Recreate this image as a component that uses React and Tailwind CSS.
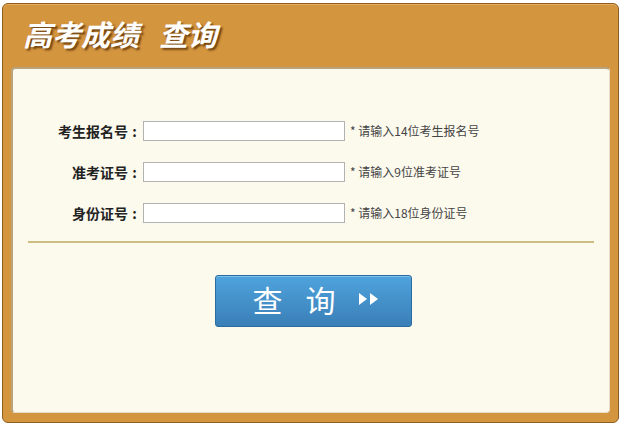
import { useState } from 'react';

const rows = [
  { label: '考生报名号', hint: '请输入14位考生报名号' },
  { label: '准考证号', hint: '请输入9位准考证号' },
  { label: '身份证号', hint: '请输入18位身份证号' },
];

function App() {
  const [values, setValues] = useState(['', '', '']);

  return (
    <div className="w-[621px] h-[425px] bg-white pt-[3px] pl-[2px] font-['Microsoft_YaHei','Noto_Sans_CJK_SC',sans-serif]">
      <div className="w-[617px] h-[420px] rounded-[6px] border border-[#8f5d1f] bg-[#d4953f] flex flex-col shadow-[inset_0_1px_0_#e3ad62]">
        {/* Header */}
        <div className="h-[63px] shrink-0 flex items-center pl-[20px] pb-[5px]">
          <h1 className="text-white text-[29px] font-bold italic leading-none [text-shadow:2px_2px_2px_rgba(80,40,0,0.75)] flex">
            <span>高考成绩</span>
            <span className="ml-[20px]">查询</span>
          </h1>
        </div>

        {/* Panel */}
        <div className="mx-[8px] mb-[9px] flex-1 rounded-[4px] bg-[#fcf9ed] border-t-2 border-l-2 border-[#b9a37f] border-r border-b border-r-[#e6dcc7] border-b-[#e6dcc7] flex flex-col">
          <div className="pt-[52px] flex flex-col gap-[21px]">
            {rows.map((row, i) => (
              <div key={row.label} className="flex items-center h-[20px]">
                <label className="w-[128px] text-right text-[14px] font-bold text-[#222] whitespace-nowrap">
                  {row.label}<span className="inline-block w-[13px] text-center">:</span>
                </label>
                <input
                  value={values[i]}
                  onChange={(e) => {
                    const next = [...values];
                    next[i] = e.target.value;
                    setValues(next);
                  }}
                  className="ml-[2px] w-[202px] h-[20px] bg-white border border-[#b2b2b2] outline-none px-1 text-[12px]"
                />
                <span className="ml-[5px] text-[12px] text-[#444]">* {row.hint}</span>
              </div>
            ))}
          </div>

          <div className="mt-[18px] mx-[15px] h-[1.5px] bg-[#cdbd80]" />

          <div className="flex justify-center pt-[32px] pl-[4px]">
            <button className="w-[197px] h-[52px] rounded-[3px] border border-[#2c6b9f] bg-gradient-to-b from-[#4fa3dd] to-[#3a7fb7] shadow-[inset_0_1px_0_#7cc0ec] flex items-center text-white pl-[37px] pb-[3px]">
              <span className="text-[30px] leading-none">查</span>
              <span className="text-[30px] leading-none ml-[23px]">询</span>
              <svg width="24" height="16" viewBox="0 0 24 16" className="ml-[21px]">
                <polygon points="2,2 10,8 2,14" fill="white" />
                <polygon points="13,2 21,8 13,14" fill="white" />
              </svg>
            </button>
          </div>
        </div>
      </div>
    </div>
  );
}

export default App;
